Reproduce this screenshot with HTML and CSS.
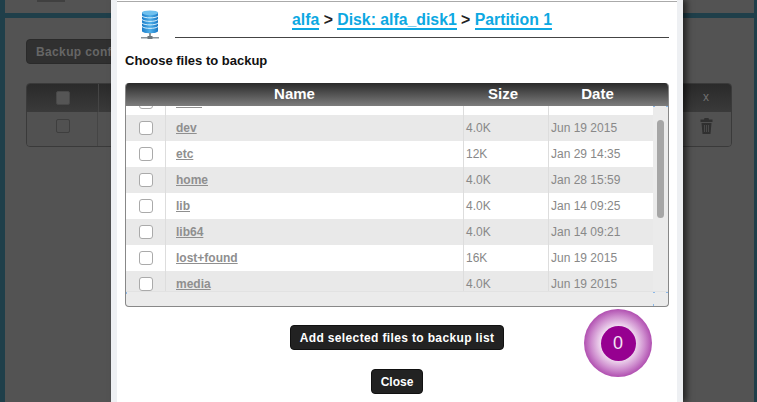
FILE: index.html
```html
<!DOCTYPE html>
<html lang="en">
<head>
  <meta charset="UTF-8" />
  <title>Backup configuration</title>
  <link rel="stylesheet" href="styles.css">
</head>
<body>
  <div class="page">
    <div class="top-card"><span class="top-icon"></span></div>
    <div class="card">
      <button class="bg-button">Backup configuration</button>
      <div class="bg-table">
        <div class="bg-head">
          <div class="bg-check-cell"><span class="bg-check head-check"></span></div>
          <div class="bg-fill"></div>
          <div class="bg-last">x</div>
        </div>
        <div class="bg-row">
          <div class="bg-check-cell"><span class="bg-check"></span></div>
          <div class="bg-fill"></div>
          <div class="bg-last">
            <svg width="13" height="16" viewBox="0 0 13 16">
              <path fill="#303030" d="M4.500 0h4l.5 1.500h3.500V4H.5V1.500H4zM1.500 5h10l-1 11h-8z"/>
              <path fill="#4a4a4a" d="M4 7h1v7H4zM6 7h1v7H6zM8 7h1v7H8z"/>
            </svg>
          </div>
        </div>
      </div>
    </div>
  </div>

  <div class="modal">
    <div class="modal-inner">
      <div class="crumbs-row">
        <div class="disk-icon">
          <svg width="20" height="32" viewBox="0 0 20 32">
            <defs>
              <linearGradient id="drum" x1="0" x2="1" y1="0" y2="0">
                <stop offset="0" stop-color="#1c7cc8"/>
                <stop offset="0.5" stop-color="#4fb0ea"/>
                <stop offset="1" stop-color="#1a78c4"/>
              </linearGradient>
            </defs>
            <path fill="url(#drum)" d="M2 4c0-2.500 16-2.500 16 0v18c0 3-16 3-16 0z"/>
            <ellipse cx="10" cy="3.800" rx="8" ry="2.400" fill="#6fc0ee"/>
            <g fill="none" stroke="#d8f0fc" stroke-width="1">
              <path d="M2 7c2 2.500 14 2.500 16 0"/>
              <path d="M2 10.500c2 2.500 14 2.500 16 0"/>
              <path d="M2 14c2 2.500 14 2.500 16 0"/>
              <path d="M2 17.500c2 2.500 14 2.500 16 0"/>
            </g>
            <path fill="#8a949a" d="M9 24h2v4H9zM1 28h18v1.500H1z"/>
            <path fill="#6c767c" d="M7.500 27h5v3h-5z"/>
          </svg>
        </div>
        <h2 class="crumbs">
          <a href="#">alfa</a> &gt; <a href="#">Disk: alfa_disk1</a> &gt; <a href="#">Partition 1</a>
        </h2>
      </div>

      <h3 class="choose">Choose files to backup</h3>

      <div class="files">
        <div class="files-head">
          <div>Name</div>
          <div>Size</div>
          <div>Date</div>
        </div>
        <div class="files-scroll">
          <div class="files-list">
            <div class="rows">
              <div class="row"><div class="c-check"><span class="check"></span></div><div class="c-name"><a href="#">boot</a></div><div class="c-size">4.0K</div><div class="c-date">Jan 28 16:00</div></div>
              <div class="row"><div class="c-check"><span class="check"></span></div><div class="c-name"><a href="#">dev</a></div><div class="c-size">4.0K</div><div class="c-date">Jun 19 2015</div></div>
              <div class="row"><div class="c-check"><span class="check"></span></div><div class="c-name"><a href="#">etc</a></div><div class="c-size">12K</div><div class="c-date">Jan 29 14:35</div></div>
              <div class="row"><div class="c-check"><span class="check"></span></div><div class="c-name"><a href="#">home</a></div><div class="c-size">4.0K</div><div class="c-date">Jan 28 15:59</div></div>
              <div class="row"><div class="c-check"><span class="check"></span></div><div class="c-name"><a href="#">lib</a></div><div class="c-size">4.0K</div><div class="c-date">Jan 14 09:25</div></div>
              <div class="row"><div class="c-check"><span class="check"></span></div><div class="c-name"><a href="#">lib64</a></div><div class="c-size">4.0K</div><div class="c-date">Jan 14 09:21</div></div>
              <div class="row"><div class="c-check"><span class="check"></span></div><div class="c-name"><a href="#">lost+found</a></div><div class="c-size">16K</div><div class="c-date">Jun 19 2015</div></div>
              <div class="row"><div class="c-check"><span class="check"></span></div><div class="c-name"><a href="#">media</a></div><div class="c-size">4.0K</div><div class="c-date">Jun 19 2015</div></div>
            </div>
          </div>
          <div class="vbar"><span class="thumb"></span></div>
        </div>
        <div class="hbar"></div>
      </div>

      <div class="actions">
        <button class="btn">Add selected files to backup list</button>
        <button class="btn btn-close">Close</button>
      </div>

      <div class="counter"><span class="counter-num">0</span></div>
    </div>
  </div>
</body>
</html>
```

FILE: styles.css
```css
html, body {
  height: 100%;
}

body {
  margin: 0;
  overflow: hidden;
  background: #1f3f4a;
  font-family: "Liberation Sans", Arial, sans-serif;
}

/* dimmed page behind the dialog */
.page {
  margin: 0 3px 0 5px;
  height: 402px;
  display: flex;
  flex-direction: column;
  gap: 5px;
}

.top-card {
  height: 13px;
  background: #535353;
  padding-left: 32px;
}

.top-icon {
  display: block;
  width: 28px;
  height: 2px;
  background: #404040;
}

.card {
  flex: 1;
  background: #535353;
  padding: 21px 22px 0 21px;
}

.bg-button {
  display: block;
  width: 200px;
  height: 25px;
  padding: 0 0 0 9px;
  text-align: left;
  background: #303030;
  color: #666;
  border: 1px solid #2a2a2a;
  border-radius: 4px;
  font: bold 12px "Liberation Sans", Arial, sans-serif;
  letter-spacing: 0.36px;
}

.bg-table {
  margin-top: 19px;
  border: 1px solid #3a3a3a;
  border-radius: 4px;
  overflow: hidden;
}

.bg-head, .bg-row {
  display: flex;
}

.bg-head {
  height: 28px;
  background: linear-gradient(#2a2a2a, #3a3a3a);
}

.bg-head .bg-last {
  box-sizing: border-box;
  padding-bottom: 2px;
}

.bg-row {
  height: 34px;
  background: #515151;
}

.bg-check-cell {
  width: 71px;
  border-right: 1px solid #454545;
  display: flex;
  align-items: center;
  justify-content: center;
}

.bg-row .bg-check-cell, .bg-row .bg-last {
  box-sizing: border-box;
  padding-bottom: 6px;
}

.bg-row .bg-check-cell {
  padding-left: 1px;
  width: 71px;
}

.bg-check {
  width: 12px;
  height: 12px;
  border: 1px solid #3e3e3e;
  border-radius: 2px;
}

.head-check {
  background: #555;
  border-color: #484848;
}

.bg-fill {
  flex: 1;
}

.bg-last {
  width: 50px;
  display: flex;
  align-items: center;
  justify-content: center;
  color: #707070;
  font-size: 12px;
}

/* dialog */
.modal {
  position: absolute;
  top: 0;
  bottom: 0;
  left: 111px;
  width: 560px;
  border: solid #eef0f3;
  border-width: 0 6px;
  background: #fff;
  box-shadow: 4px 0 6px rgba(0, 0, 0, 0.55);
}

.modal-inner {
  position: relative;
  height: 100%;
  box-sizing: border-box;
  margin-top: 1px;
  border-top: 1px solid #aaa;
  padding: 0 8px;
}

.crumbs-row {
  display: flex;
  align-items: flex-start;
  height: 37px;
}

.disk-icon {
  width: 50px;
  padding: 7px 0 0 15px;
  box-sizing: border-box;
  height: 40px;
}

.crumbs {
  flex: 1;
  margin: 0;
  height: 36px;
  box-sizing: border-box;
  padding: 9px 0 0;
  border-bottom: 1px solid #444;
  text-align: center;
  font-size: 15.8px;
  line-height: 18px;
  color: #222;
}

.crumbs a {
  color: #0ca8e2;
  text-decoration: none;
  border-bottom: 2px solid #0ca8e2;
}

.choose {
  margin: 14px 0 0;
  font-size: 13px;
  line-height: 16px;
  color: #111;
}

.files {
  margin-top: 14px;
  height: 224px;
  box-sizing: border-box;
  border: 1px solid #888;
  border-top: 0;
  border-radius: 4px;
  overflow: hidden;
  background: #ebebeb;
}

.files-head {
  display: grid;
  grid-template-columns: 337px 80px 109px;
  height: 23px;
  background: linear-gradient(#2a2a2a, #7d7d7d);
  color: #fff;
  font-weight: bold;
  font-size: 15px;
  line-height: 22px;
  text-align: center;
}

.files-scroll {
  display: flex;
  height: 185px;
}

.files-list {
  width: 527px;
  overflow: hidden;
  background: #fff;
}

.rows {
  margin-top: -17px;
}

.row {
  display: grid;
  grid-template-columns: 40px 298px 85px 104px;
  height: 26px;
  background: #fff;
  color: #888;
  font-size: 12px;
  line-height: 26px;
}

.row:nth-child(even) {
  background: #e9e9e9;
}

.c-check {
  display: flex;
  align-items: center;
  justify-content: center;
  border-right: 1px solid #ddd;
}

.check {
  width: 12px;
  height: 12px;
  background: #fff;
  border: 1px solid #aaa;
  border-radius: 3px;
}

.c-name {
  padding-left: 10px;
  border-right: 1px solid #ddd;
  font-weight: bold;
}

.c-name a {
  color: #8f8f8f;
}

.c-size {
  padding-left: 2px;
  border-right: 1px solid #ddd;
}

.c-date {
  padding-left: 2px;
}

/* scrollbars, with the little blue ticks at their corners */
.vbar {
  flex: 1;
  padding: 14px 0 0 4px;
  background:
    linear-gradient(#8bb8e8, #8bb8e8) left top / 2px 1px no-repeat,
    linear-gradient(#8bb8e8, #8bb8e8) right top / 2px 1px no-repeat,
    #ebebeb;
}

.thumb {
  display: block;
  width: 7px;
  height: 98px;
  background: #a6a6a6;
  border-radius: 4px;
}

.hbar {
  height: 15px;
  box-sizing: border-box;
  border-top: 1px solid #e2e2e2;
  background:
    linear-gradient(#8bb8e8, #8bb8e8) left top / 1px 2px no-repeat,
    linear-gradient(#8bb8e8, #8bb8e8) 527px top / 2px 1px no-repeat,
    linear-gradient(#8bb8e8, #8bb8e8) 527px bottom / 1px 2px no-repeat,
    linear-gradient(#8bb8e8, #8bb8e8) right top / 2px 1px no-repeat;
}

.actions {
  display: flex;
  flex-direction: column;
  align-items: center;
  gap: 19px;
  margin-top: 18px;
}

.btn {
  height: 25px;
  padding: 0 9px;
  background: #222;
  color: #fff;
  border: 1px solid #111;
  border-radius: 4px;
  font: bold 12px "Liberation Sans", Arial, sans-serif;
  letter-spacing: 0.36px;
}

.btn-close {
  letter-spacing: 0;
}

/* selected files counter, sits over the dialog corner */
.counter {
  position: absolute;
  left: 467px;
  top: 307px;
  width: 68px;
  height: 68px;
  border-radius: 50%;
  background: radial-gradient(circle closest-side, #f0dcf0 50%, #cf8fcf 78%, #b04fb0 100%);
  display: flex;
  align-items: center;
  justify-content: center;
}

.counter-num {
  width: 35px;
  height: 35px;
  border-radius: 50%;
  background: #960090;
  color: #f4e4f4;
  font-size: 18px;
  line-height: 35px;
  text-align: center;
}
```
